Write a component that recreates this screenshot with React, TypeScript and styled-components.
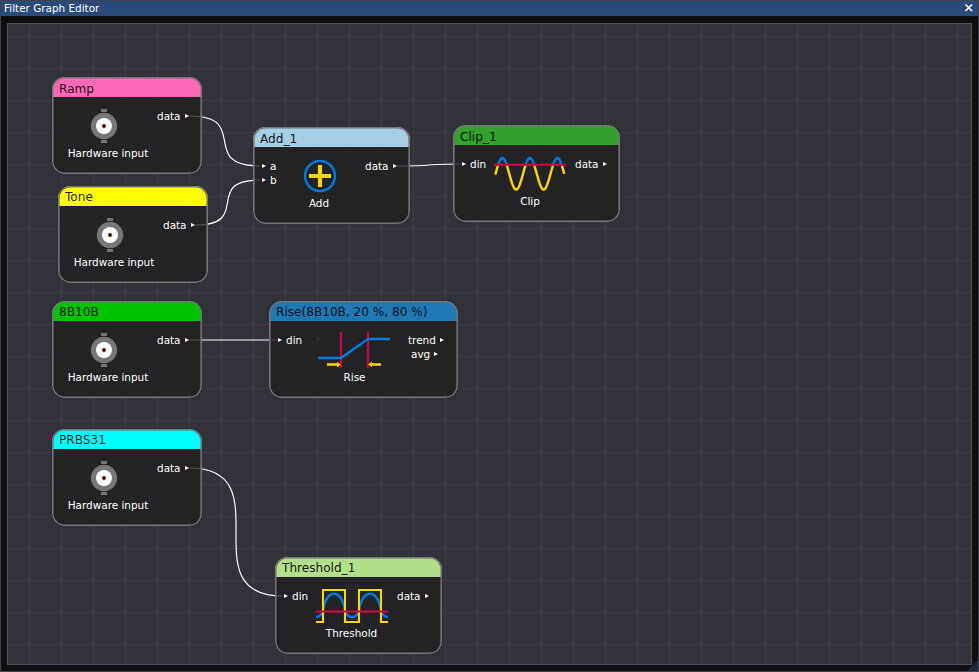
import React from "react";
import styled, { createGlobalStyle } from "styled-components";

const GlobalStyle = createGlobalStyle`
  * { box-sizing: border-box; }
  body { margin: 0; background: #0f0f0f; }
`;

const Window = styled.div`
  width: 979px;
  height: 672px;
  display: flex;
  flex-direction: column;
  position: relative;
  overflow: hidden;
  background: #0f0f0f;
  border: 1px solid #41414b;
  font: 10.45px/14px "DejaVu Sans", sans-serif;
  color: #fff;
  white-space: nowrap;
`;

const TitleBar = styled.header`
  height: 15px;
  flex: none;
  display: flex;
  align-items: flex-start;
  justify-content: space-between;
  padding: 0 5px 0 3px;
  background: #294a7a;
`;

const CloseIcon = styled.svg`
  width: 9px;
  height: 9px;
  margin-top: 2px;
  stroke: #fff;
  stroke-width: 1.6;
`;

const Canvas = styled.main`
  flex: 1;
  position: relative;
  margin: 7px 6px 6px;
  border: 1px solid #50505c;
  overflow: hidden;
  background-color: #32323a;
  background-image: linear-gradient(90deg, #3d3d44 1px, transparent 1px),
    linear-gradient(#3d3d44 1px, transparent 1px);
  background-size: 32px 32px;
  background-position: 21px 12px;
`;

const ResizeGrip = styled.div`
  position: absolute;
  right: 0;
  bottom: 0;
  width: 11px;
  height: 11px;
  background: #192b43;
  clip-path: polygon(100% 0, 100% 100%, 0 100%);
`;

const Wires = styled.svg`
  position: absolute;
  inset: 0;
  width: 963px;
  height: 640px;
  fill: none;
  stroke: #fff;
  stroke-width: 1.2;
`;

const NodeBox = styled.section<{ $x: number; $y: number; $w: number }>`
  position: absolute;
  left: ${(p) => p.$x}px;
  top: ${(p) => p.$y}px;
  width: ${(p) => p.$w}px;
  height: 97px;
  border-radius: 12.5px;
  overflow: hidden;
  background: rgba(32, 32, 32, 0.784);
  &::after {
    content: "";
    position: absolute;
    inset: 0;
    border-radius: 12.5px;
    box-shadow: inset 0 0 0 1.6px #757577;
  }
`;

const NodeTitle = styled.h2<{ $color: string; $drop?: number }>`
  margin: 0;
  height: 20px;
  padding: ${(p) => 4 + (p.$drop ?? 0)}px 0 0 7px;
  font-size: 12.1px;
  line-height: 14px;
  font-weight: 400;
  color: rgba(0, 0, 0, 0.9);
  background: ${(p) => p.$color};
`;

const NodeBody = styled.div`
  display: flex;
  height: 77px;
  padding: 12px 0 0 9px;
`;

const Ports = styled.div<{ $width: number }>`
  width: ${(p) => p.$width}px;
  flex: none;
`;

const Port = styled.div<{ $indent?: number }>`
  height: 14px;
  display: flex;
  align-items: center;
  gap: 4px;
  padding-left: ${(p) => p.$indent ?? 0}px;
`;

const ArrowIcon = styled.svg`
  width: 4px;
  height: 4px;
  flex: none;
  fill: #fff;
`;

const Glyph = styled.figure<{ $width: number }>`
  width: ${(p) => p.$width}px;
  flex: none;
  margin: -1px 0 0;
  display: flex;
  flex-direction: column;
  gap: 2px;
`;

const Art = styled.svg`
  width: 72px;
  height: 36px;
  overflow: visible;
  fill: none;
`;

const Caption = styled.figcaption<{ $shift?: number }>`
  align-self: center;
  margin-left: ${(p) => p.$shift ?? 0}px;
`;

const BLUE = "#0079e2";
const YELLOW = "#ffd500";
const RED = "#d8003f";

const Arrow = () => (
  <ArrowIcon viewBox="0 0 4 4">
    <path d="M0 0L4 2L0 4Z" />
  </ArrowIcon>
);

const Coax = () => (
  <Art viewBox="0 0 72 36">
    <path d="M33 1h6v3h-6zM33 32h6v3h-6z" fill="#737373" />
    <circle cx="36" cy="18" r="13.2" fill="#777" />
    <circle cx="36" cy="18" r="8" fill="#fff" />
    <circle cx="36" cy="18" r="1.9" fill="#000" stroke="#b87800" strokeWidth="0.7" />
  </Art>
);

const Plus = () => (
  <Art viewBox="0 0 72 36">
    <circle cx="36" cy="18" r="15" stroke={BLUE} strokeWidth="2.4" />
    <path d="M25 18H47M36 7V29" stroke={YELLOW} strokeWidth="4.2" />
  </Art>
);

const wave =
  "M" +
  Array.from({ length: 139 }, (_, i) => {
    const x = 1.3 + i * 0.5;
    return `${x.toFixed(1)} ${(17.8 - 15.8 * Math.cos(((x - 35.9) * 2 * Math.PI) / 27.5)).toFixed(2)}`;
  }).join("L");

const Clip = () => (
  <Art viewBox="0 0 72 36">
    <clipPath id="peaks"><rect x="0" y="-2" width="72" height="9.7" /></clipPath>
    <clipPath id="body"><rect x="0" y="9.7" width="72" height="30" /></clipPath>
    <path d={wave} stroke={BLUE} strokeWidth="2.4" clipPath="url(#peaks)" />
    <path d={wave} stroke={YELLOW} strokeWidth="2.4" clipPath="url(#body)" />
    <path d="M0 8.8H72" stroke={RED} strokeWidth="2.1" />
  </Art>
);

const Rise = () => (
  <Art viewBox="0 0 72 36">
    <path d="M23 0V36M50 0V36" stroke={RED} strokeWidth="2" />
    <path d="M0 26H23L50 7H72" stroke={BLUE} strokeWidth="2.5" />
    <path d="M.3 5.8V8.2" stroke={BLUE} strokeWidth=".6" />
    <path d="M9 32.5H20M63 32.5H53" stroke={YELLOW} strokeWidth="2.4" />
    <path d="M19 29.8L23 32.5L19 35.2ZM54 29.8L50 32.5L54 35.2Z" fill={YELLOW} />
  </Art>
);

const Threshold = () => (
  <Art viewBox="0 0 72 36">
    <path
      d="M0 29C4 29 5.5 27 7 22C9 12 12 5.7 18 5.7S27 12 29 22C30.5 27 32 29 36 29S41.5 27 43 22C45 12 48 5.7 54 5.7S63 12 65 22C66.5 27 68 29 72 29"
      stroke={BLUE}
      strokeWidth="2.5"
    />
    <path d="M0 34H7V2H29V34H43V2H65V34H72" stroke={YELLOW} strokeWidth="2.1" />
    <path d="M0 23.5H72" stroke={RED} strokeWidth="2.2" />
  </Art>
);

type PortSpec = { name: string; indent?: number };

type NodeSpec = {
  title: string;
  drop?: number;
  color: string;
  x: number;
  y: number;
  w: number;
  inputs: string[];
  inWidth: number;
  caption: string;
  shift?: number;
  art: React.ComponentType;
  artWidth: number;
  outputs: PortSpec[];
};

const source = {
  w: 150,
  inputs: [],
  inWidth: 7,
  caption: "Hardware input",
  art: Coax,
  artWidth: 89,
  shift: -9,
  outputs: [{ name: "data" }],
};

const nodes: NodeSpec[] = [
  { ...source, title: "Ramp", drop: 1, color: "#ff69b8", x: 44, y: 53 },
  { ...source, title: "Tone", color: "#ffff00", x: 50, y: 162 },
  { ...source, title: "8B10B", color: "#00c300", x: 44, y: 277 },
  { ...source, title: "PRBS31", color: "#00ffff", x: 44, y: 405 },
  {
    title: "Add_1", drop: 1, color: "#a6cee3", x: 245, y: 103, w: 157,
    inputs: ["a", "b"], inWidth: 22, caption: "Add", shift: -11, art: Plus, artWidth: 81,
    outputs: [{ name: "data" }],
  },
  {
    title: "Clip_1", drop: 1, color: "#33a02c", x: 445, y: 101, w: 167,
    inputs: ["din"], inWidth: 32, caption: "Clip", shift: -9, art: Clip, artWidth: 81,
    outputs: [{ name: "data" }],
  },
  {
    title: "Rise(8B10B, 20 %, 80 %)", color: "#1f78b4", x: 261, y: 277, w: 189,
    inputs: ["din"], inWidth: 40, caption: "Rise", shift: -17, art: Rise, artWidth: 90,
    outputs: [{ name: "trend" }, { name: "avg", indent: 3 }],
  },
  {
    title: "Threshold_1", color: "#b2df8a", x: 267, y: 533, w: 167,
    inputs: ["din"], inWidth: 32, caption: "Threshold", shift: -10, art: Threshold, artWidth: 81,
    outputs: [{ name: "data" }],
  },
];

const links = [
  [181, 92, 252, 142],
  [187, 201, 252, 156],
  [389, 142, 453, 140],
  [181, 316, 269, 316],
  [181, 444, 275, 572],
];

const linkPath = ([x1, y1, x2, y2]: number[]) => {
  const half = Math.hypot(x2 - x1, y2 - y1) / 2;
  const pull = half < 100 ? 100 * Math.sin((Math.PI / 2) * (half / 100)) : 100;
  return `M${x1} ${y1}C${x1 + pull} ${y1} ${x2 - pull} ${y2} ${x2} ${y2}`;
};

const Node = ({ node }: { node: NodeSpec }) => {
  const Picture = node.art;
  return (
    <NodeBox $x={node.x} $y={node.y} $w={node.w}>
      <NodeTitle $color={node.color} $drop={node.drop}>{node.title}</NodeTitle>
      <NodeBody>
        <Ports $width={node.inWidth}>
          {node.inputs.map((name) => (
            <Port key={name}><Arrow />{name}</Port>
          ))}
        </Ports>
        <Glyph $width={node.artWidth}>
          <Picture />
          <Caption $shift={node.shift}>{node.caption}</Caption>
        </Glyph>
        <Ports $width={40}>
          {node.outputs.map((port) => (
            <Port key={port.name} $indent={port.indent}>{port.name}<Arrow /></Port>
          ))}
        </Ports>
      </NodeBody>
    </NodeBox>
  );
};

export default function App() {
  return (
    <>
      <GlobalStyle />
      <Window>
        <TitleBar>
          <span>Filter Graph Editor</span>
          <CloseIcon viewBox="0 0 9 9"><path d="M1.5 1.5L8 8M8 1.5L1.5 8" /></CloseIcon>
        </TitleBar>
        <Canvas>
          <Wires>
            {links.map((link) => <path key={link.join()} d={linkPath(link)} />)}
          </Wires>
          {nodes.map((node) => <Node key={node.title} node={node} />)}
        </Canvas>
        <ResizeGrip />
      </Window>
    </>
  );
}
